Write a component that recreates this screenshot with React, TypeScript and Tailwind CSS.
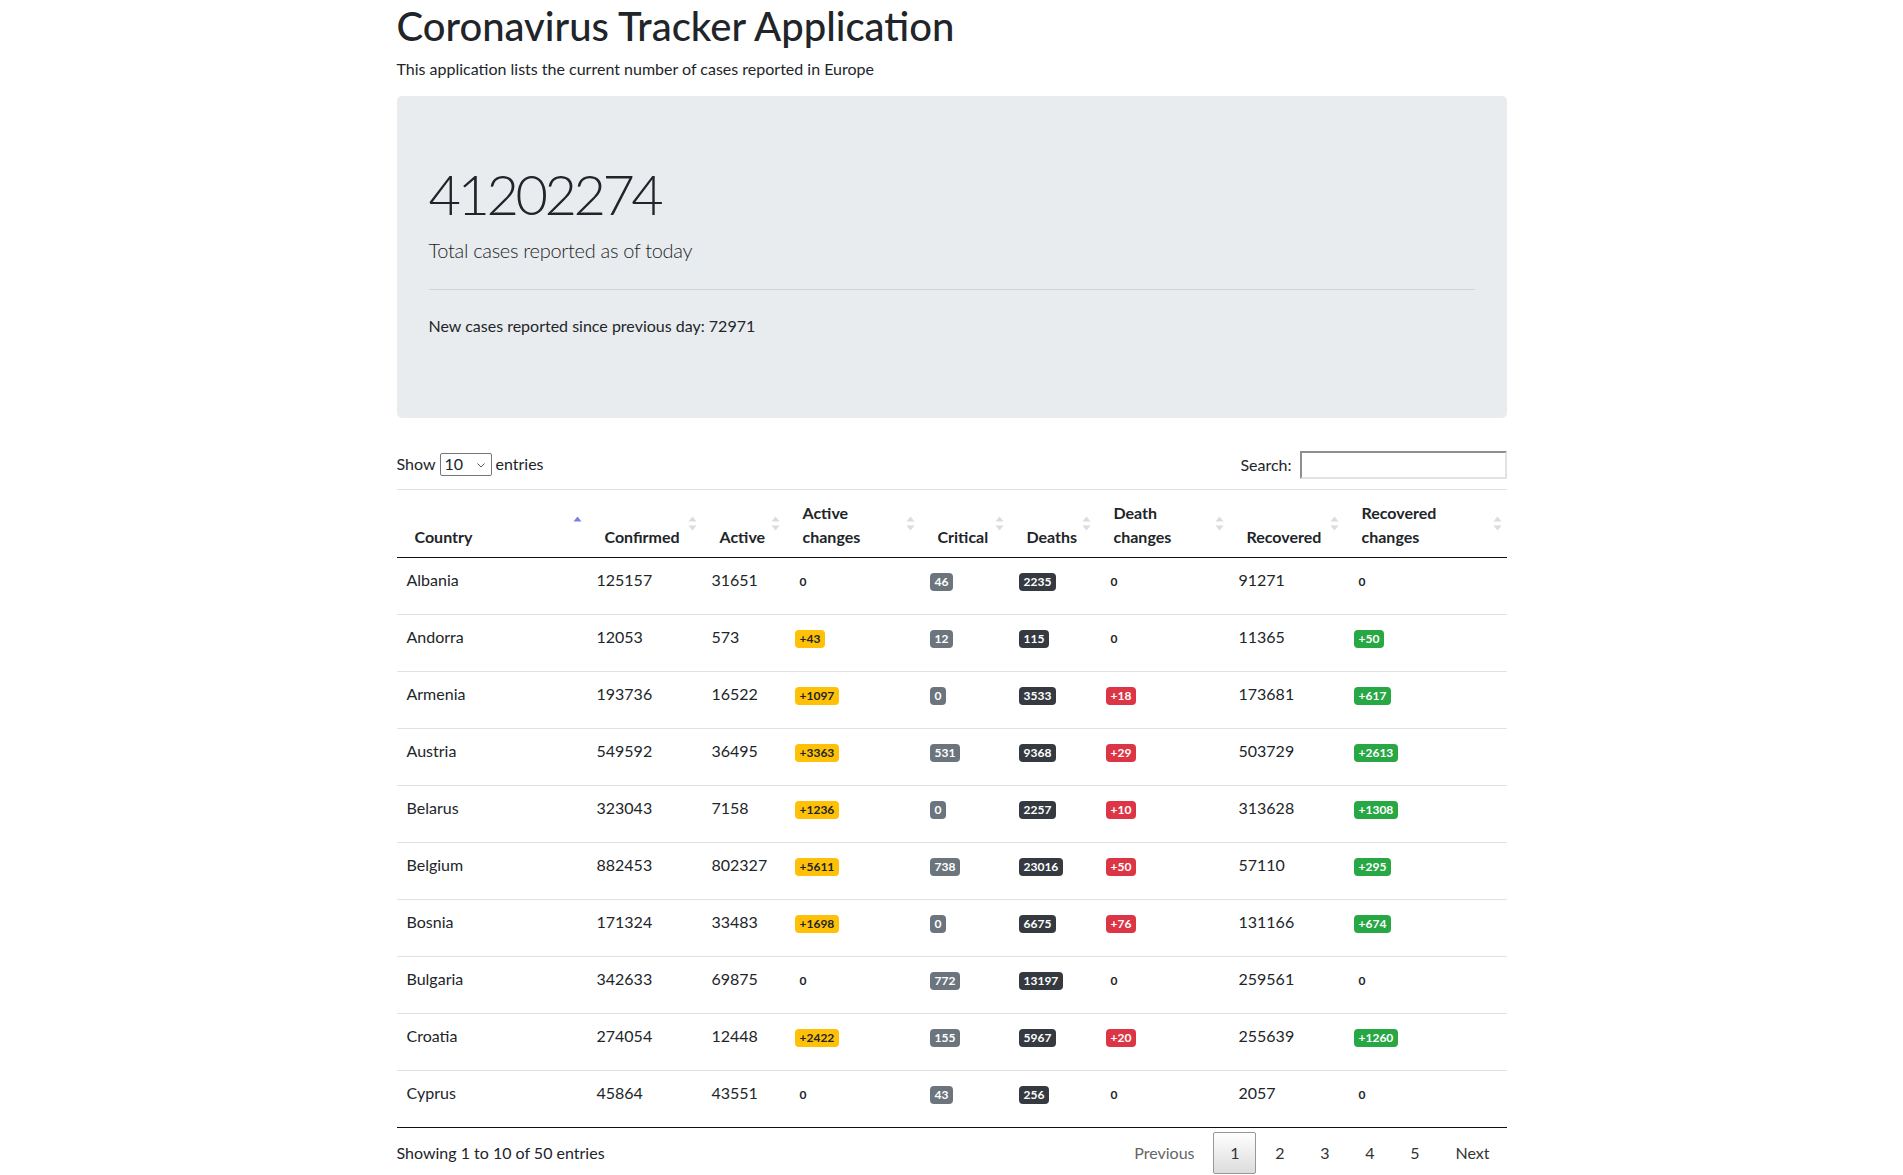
import React from 'react';

type Row = {
  country: string;
  confirmed: number;
  active: number;
  activeChange: number;
  critical: number;
  deaths: number;
  deathChange: number;
  recovered: number;
  recoveredChange: number;
};

const ROWS: Row[] = [
  { country: 'Albania', confirmed: 125157, active: 31651, activeChange: 0, critical: 46, deaths: 2235, deathChange: 0, recovered: 91271, recoveredChange: 0 },
  { country: 'Andorra', confirmed: 12053, active: 573, activeChange: 43, critical: 12, deaths: 115, deathChange: 0, recovered: 11365, recoveredChange: 50 },
  { country: 'Armenia', confirmed: 193736, active: 16522, activeChange: 1097, critical: 0, deaths: 3533, deathChange: 18, recovered: 173681, recoveredChange: 617 },
  { country: 'Austria', confirmed: 549592, active: 36495, activeChange: 3363, critical: 531, deaths: 9368, deathChange: 29, recovered: 503729, recoveredChange: 2613 },
  { country: 'Belarus', confirmed: 323043, active: 7158, activeChange: 1236, critical: 0, deaths: 2257, deathChange: 10, recovered: 313628, recoveredChange: 1308 },
  { country: 'Belgium', confirmed: 882453, active: 802327, activeChange: 5611, critical: 738, deaths: 23016, deathChange: 50, recovered: 57110, recoveredChange: 295 },
  { country: 'Bosnia', confirmed: 171324, active: 33483, activeChange: 1698, critical: 0, deaths: 6675, deathChange: 76, recovered: 131166, recoveredChange: 674 },
  { country: 'Bulgaria', confirmed: 342633, active: 69875, activeChange: 0, critical: 772, deaths: 13197, deathChange: 0, recovered: 259561, recoveredChange: 0 },
  { country: 'Croatia', confirmed: 274054, active: 12448, activeChange: 2422, critical: 155, deaths: 5967, deathChange: 20, recovered: 255639, recoveredChange: 1260 },
  { country: 'Cyprus', confirmed: 45864, active: 43551, activeChange: 0, critical: 43, deaths: 256, deathChange: 0, recovered: 2057, recoveredChange: 0 },
];

const BADGE_STYLES = {
  warning: 'bg-[#ffc107] text-[#212529]',
  secondary: 'bg-[#6c757d] text-white',
  dark: 'bg-[#343a40] text-white',
  danger: 'bg-[#dc3545] text-white',
  success: 'bg-[#28a745] text-white',
  plain: 'text-[#212529]',
};

const Badge: React.FC<{ variant: keyof typeof BADGE_STYLES; children: React.ReactNode }> = ({ variant, children }) => (
  <span className={`inline-block px-[5px] py-[3px] text-[12px] leading-none font-bold rounded-[4px] align-baseline ${BADGE_STYLES[variant]}`}>
    {children}
  </span>
);

const Change: React.FC<{ value: number; variant: keyof typeof BADGE_STYLES }> = ({ value, variant }) =>
  value === 0 ? <Badge variant="plain">0</Badge> : <Badge variant={variant}>+{value}</Badge>;

const SortIcon: React.FC<{ asc?: boolean }> = ({ asc }) => (
  <svg width="9" height="15" viewBox="0 0 9 15" className="absolute right-[5px] top-1/2 -translate-y-1/2">
    {asc ? (
      <polygon points="0.5,5 4.5,0 8.5,5" fill="#7f7fe0" />
    ) : (
      <>
        <polygon points="0.5,5 4.5,0 8.5,5" fill="#dcdcdc" />
        <polygon points="0.5,9 4.5,14 8.5,9" fill="#dcdcdc" />
      </>
    )}
  </svg>
);

const COLUMNS: { label: React.ReactNode; width: string; asc?: boolean }[] = [
  { label: 'Country', width: 'w-[190px]', asc: true },
  { label: 'Confirmed', width: 'w-[115px]' },
  { label: 'Active', width: 'w-[83px]' },
  { label: <>Active<br />changes</>, width: 'w-[135px]' },
  { label: 'Critical', width: 'w-[89px]' },
  { label: 'Deaths', width: 'w-[87px]' },
  { label: <>Death<br />changes</>, width: 'w-[133px]' },
  { label: 'Recovered', width: 'w-[115px]' },
  { label: <>Recovered<br />changes</>, width: 'w-[163px]' },
];

const Pagination: React.FC = () => (
  <div className="flex items-center pt-[4px]">
    <span className="px-4 py-2 border border-transparent text-[#666] ml-[2px]">Previous</span>
    <span className="w-[43px] py-2 border border-[#979797] rounded-[2px] bg-gradient-to-b from-white to-[#dcdcdc] text-[#333] ml-[2px] text-center">1</span>
    {[2, 3, 4, 5].map(n => (
      <span key={n} className="w-[43px] py-2 border border-transparent text-[#333] ml-[2px] text-center">{n}</span>
    ))}
    <span className="px-4 py-2 border border-transparent text-[#333] ml-[2px]">Next</span>
  </div>
);

export default function App() {
  return (
    <div className="min-h-screen bg-white text-[#212529] text-[16px] leading-6 font-['Lato','Liberation_Sans',sans-serif]">
      <div className="w-[1110px] mx-auto">
        <h1 className="text-[40px] leading-[48px] font-medium pt-[2px] mb-[6px]">Coronavirus Tracker Application</h1>
        <p className="pt-[1px] mb-[15px]">This application lists the current number of cases reported in Europe</p>

        <div className="bg-[#e9ecef] rounded-[5px] px-8 py-16 mb-[33px]">
          <h2 className="text-[56px] leading-[67px] font-light tracking-[-3.5px] mb-2">41202274</h2>
          <p className="text-[20px] leading-[30px] font-light tracking-[-0.3px] mb-4">Total cases reported as of today</p>
          <hr className="my-6 border-0 border-t border-[rgba(0,0,0,0.1)]" />
          <p className="mb-4">New cases reported since previous day: 72971</p>
        </div>

        <div className="flex items-start justify-between h-[38px]">
          <div className="flex items-center gap-[4px] mt-[1px]">
            <span>Show</span>
            <div className="relative flex items-center w-[52px] h-[23px] border border-[#767676] rounded-[2px] bg-white pl-[4px]">
              <span>10</span>
              <svg width="8" height="5" viewBox="0 0 8 5" className="absolute right-[6px] top-[9px]">
                <polyline points="0.5,0.5 4,4 7.5,0.5" fill="none" stroke="#555" strokeWidth="1" />
              </svg>
            </div>
            <span>entries</span>
          </div>
          <div className="flex items-center gap-[8px]">
            <span>Search:</span>
            <div className="w-[207px] h-[28px] bg-white border-2 border-t-[#8f8f8f] border-l-[#8f8f8f] border-b-[#e3e3e3] border-r-[#e3e3e3]" />
          </div>
        </div>

        <table className="w-full table-fixed border-collapse">
          <thead>
            <tr>
              {COLUMNS.map((col, i) => (
                <th
                  key={i}
                  className={`${col.width} relative text-left align-bottom font-bold border-t border-t-[#dee2e6] border-b border-b-[#111] pl-[18px] pr-[10px] pt-[11px] pb-[8px] whitespace-nowrap`}
                >
                  {col.label}
                  <SortIcon asc={col.asc} />
                </th>
              ))}
            </tr>
          </thead>
          <tbody>
            {ROWS.map((r, i) => {
              const border = i === ROWS.length - 1 ? 'border-b border-b-[#111]' : 'border-b border-b-[#dee2e6]';
              const td = `px-[10px] pt-[10px] pb-[22px] align-top ${border}`;
              return (
                <tr key={r.country}>
                  <td className={td}>{r.country}</td>
                  <td className={td}>{r.confirmed}</td>
                  <td className={td}>{r.active}</td>
                  <td className={td}><Change value={r.activeChange} variant="warning" /></td>
                  <td className={td}><Badge variant="secondary">{r.critical}</Badge></td>
                  <td className={td}><Badge variant="dark">{r.deaths}</Badge></td>
                  <td className={td}><Change value={r.deathChange} variant="danger" /></td>
                  <td className={td}>{r.recovered}</td>
                  <td className={td}><Change value={r.recoveredChange} variant="success" /></td>
                </tr>
              );
            })}
          </tbody>
        </table>

        <div className="flex items-start justify-between">
          <div className="pt-[13px]">Showing 1 to 10 of 50 entries</div>
          <Pagination />
        </div>
      </div>
    </div>
  );
}
